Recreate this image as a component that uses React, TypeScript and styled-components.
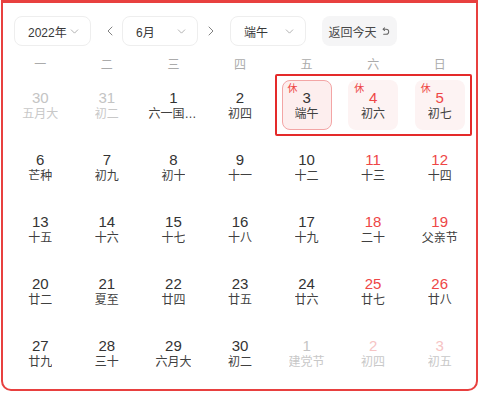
import React from "react";
import styled, { createGlobalStyle } from "styled-components";
import { ChevronDown, ChevronLeft, ChevronRight } from "lucide-react";

const GlobalStyle = createGlobalStyle`
    body {
        margin: 0;
        background: #fff;
        font-family: "Liberation Sans", "Noto Sans CJK SC", sans-serif;
    }
`;

const RED = "#ee4646";

const Frame = styled.div`
    box-sizing: border-box;
    margin-left: 1px;
    width: 477px;
    height: 391px;
    border: 2px solid #e8403f;
    border-top-width: 3px;
    border-radius: 0 0 10px 10px;
    padding: 13px 3px 0 4px;
`;

const Toolbar = styled.div`
    display: flex;
    align-items: center;
    height: 30px;
    margin-left: 7px;
`;

const Select = styled.div<{ $w: number; $gap?: number }>`
    box-sizing: border-box;
    width: ${(p) => p.$w}px;
    height: 30px;
    margin-right: ${(p) => p.$gap ?? 0}px;
    border: 1px solid #eeeeee;
    border-radius: 8px;
    display: flex;
    align-items: center;
    justify-content: space-between;
    padding: 0 9px 0 13px;
    font-size: 12px;
    color: #383838;
`;

const ArrowButton = styled.div<{ $l: number; $r: number }>`
    width: 20px;
    height: 30px;
    margin: 0 ${(p) => p.$r}px 0 ${(p) => p.$l}px;
    display: flex;
    align-items: center;
    justify-content: center;
    color: #777;
`;

const TodayButton = styled.div`
    box-sizing: border-box;
    width: 75px;
    height: 30px;
    border-radius: 8px;
    background: #f5f5f6;
    display: flex;
    align-items: center;
    justify-content: center;
    gap: 3px;
    font-size: 12px;
    color: #484848;
`;

const Weekdays = styled.div`
    display: grid;
    grid-template-columns: repeat(7, 1fr);
    margin-top: 9px;
    height: 20px;
`;

const Weekday = styled.div`
    text-align: center;
    line-height: 20px;
    font-size: 12px;
    color: #ababab;
`;

const Weeks = styled.div`
    display: flex;
    flex-direction: column;
    gap: 12px;
    margin-top: 5px;
`;

const Week = styled.div`
    position: relative;
    display: grid;
    grid-template-columns: repeat(7, 1fr);
`;

const Highlight = styled.div`
    position: absolute;
    top: -6px;
    bottom: -6px;
    left: calc(400% / 7 + 2px);
    right: 1px;
    border: 2px solid #e42a2a;
    border-radius: 2px;
    pointer-events: none;
`;

const Cell = styled.div<{ $holiday: boolean; $selected: boolean }>`
    position: relative;
    box-sizing: border-box;
    justify-self: center;
    width: 50px;
    height: 50px;
    padding-top: 8px;
    border-radius: 8px;
    border: 1px solid ${(p) => (p.$selected ? "#f3a5a5" : "transparent")};
    background: ${(p) => (p.$selected ? "#fdeeee" : p.$holiday ? "#fdf3f3" : "transparent")};
    display: flex;
    flex-direction: column;
    align-items: center;
`;

const DayNum = styled.div<{ $color: string }>`
    font-size: 15px;
    line-height: 17px;
    color: ${(p) => p.$color};
`;

const Lunar = styled.div<{ $color: string }>`
    max-width: 50px;
    font-size: 12px;
    line-height: 16px;
    color: ${(p) => p.$color};
    white-space: nowrap;
    overflow: hidden;
    text-overflow: ellipsis;
`;

const Rest = styled.span`
    position: absolute;
    top: 2px;
    left: 5px;
    font-size: 10px;
    line-height: 12px;
    color: ${RED};
`;

type Kind = "cur" | "other";

interface Day {
    d: number;
    lunar: string;
    kind?: Kind;
    rest?: boolean;
    selected?: boolean;
}

const weeks: Day[][] = [
    [
        { d: 30, lunar: "五月大", kind: "other" },
        { d: 31, lunar: "初二", kind: "other" },
        { d: 1, lunar: "六一国际儿童节" },
        { d: 2, lunar: "初四" },
        { d: 3, lunar: "端午", rest: true, selected: true },
        { d: 4, lunar: "初六", rest: true },
        { d: 5, lunar: "初七", rest: true },
    ],
    [
        { d: 6, lunar: "芒种" },
        { d: 7, lunar: "初九" },
        { d: 8, lunar: "初十" },
        { d: 9, lunar: "十一" },
        { d: 10, lunar: "十二" },
        { d: 11, lunar: "十三" },
        { d: 12, lunar: "十四" },
    ],
    [
        { d: 13, lunar: "十五" },
        { d: 14, lunar: "十六" },
        { d: 15, lunar: "十七" },
        { d: 16, lunar: "十八" },
        { d: 17, lunar: "十九" },
        { d: 18, lunar: "二十" },
        { d: 19, lunar: "父亲节" },
    ],
    [
        { d: 20, lunar: "廿二" },
        { d: 21, lunar: "夏至" },
        { d: 22, lunar: "廿四" },
        { d: 23, lunar: "廿五" },
        { d: 24, lunar: "廿六" },
        { d: 25, lunar: "廿七" },
        { d: 26, lunar: "廿八" },
    ],
    [
        { d: 27, lunar: "廿九" },
        { d: 28, lunar: "三十" },
        { d: 29, lunar: "六月大" },
        { d: 30, lunar: "初二" },
        { d: 1, lunar: "建党节", kind: "other" },
        { d: 2, lunar: "初四", kind: "other" },
        { d: 3, lunar: "初五", kind: "other" },
    ],
];

const weekdayNames = ["一", "二", "三", "四", "五", "六", "日"];

function numColor(day: Day, col: number) {
    const weekend = col >= 5;
    if (day.kind === "other") return weekend ? "#f6c4c4" : "#c4c4c4";
    return weekend ? RED : "#333";
}

function lunarColor(day: Day) {
    return day.kind === "other" ? "#c8c8c8" : "#404040";
}

const UndoIcon: React.FC = () => (
    <svg width="11" height="11" viewBox="0 0 12 12" fill="none" stroke="#666" strokeWidth="1.1" strokeLinecap="round" strokeLinejoin="round">
        <path d="M3.5 3.5h3.2a2.8 2.8 0 0 1 0 5.6H4" />
        <path d="M5 2 3.5 3.5 5 5" />
    </svg>
);

const Chevron = () => <ChevronDown size={13} strokeWidth={1.4} color="#9a9a9a" />;

export default function App() {
    return (
        <>
            <GlobalStyle />
            <Frame>
                <Toolbar>
                    <Select $w={77}>
                        <span>2022年</span>
                        <Chevron />
                    </Select>
                    <ArrowButton $l={9} $r={2}>
                        <ChevronLeft size={16} strokeWidth={1.4} />
                    </ArrowButton>
                    <Select $w={76}>
                        <span>6月</span>
                        <Chevron />
                    </Select>
                    <ArrowButton $l={3} $r={9}>
                        <ChevronRight size={16} strokeWidth={1.4} />
                    </ArrowButton>
                    <Select $w={76} $gap={16}>
                        <span>端午</span>
                        <Chevron />
                    </Select>
                    <TodayButton>
                        返回今天
                        <UndoIcon />
                    </TodayButton>
                </Toolbar>
                <Weekdays>
                    {weekdayNames.map((w) => (
                        <Weekday key={w}>{w}</Weekday>
                    ))}
                </Weekdays>
                <Weeks>
                    {weeks.map((week, wi) => (
                        <Week key={wi}>
                            {week.map((day, col) => (
                                <Cell key={col} $holiday={!!day.rest} $selected={!!day.selected}>
                                    {day.rest && <Rest>休</Rest>}
                                    <DayNum $color={numColor(day, col)}>{day.d}</DayNum>
                                    <Lunar $color={lunarColor(day)}>{day.lunar}</Lunar>
                                </Cell>
                            ))}
                            {wi === 0 && <Highlight />}
                        </Week>
                    ))}
                </Weeks>
            </Frame>
        </>
    );
}
